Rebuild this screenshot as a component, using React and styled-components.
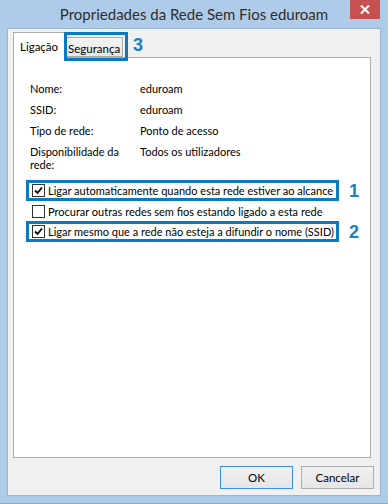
import styled, { createGlobalStyle } from 'styled-components'

const GlobalStyle = createGlobalStyle`
    html, body {
        margin: 0;
        padding: 0;
        background: #aecbe9;
    }
    body {
        font-family: Lato, "Liberation Sans", sans-serif;
        font-size: 11px;
        color: #000;
    }
`

// The blue window frame.
const Frame = styled.div`
    width: 388px;
    height: 504px;
    box-sizing: border-box;
    background: #aecbe9;
    border-bottom: 1px solid #8fa9c6;
    display: flex;
    flex-direction: column;
`
const TitleBar = styled.div`
    height: 28px;
    display: grid;
    grid-template-columns: 1fr auto 1fr;
    align-items: start;
`
const Title = styled.div`
    grid-column: 2;
    padding-top: 4px;
    font-size: 15px;
    line-height: 20px;
    color: #2e2e2e;
`
const CloseButton = styled.div`
    grid-column: 3;
    justify-self: end;
    margin-right: 8px;
    width: 30px;
    height: 19px;
    background: #c75050;
    display: flex;
    align-items: center;
    justify-content: center;
`
const Client = styled.div`
    margin: 0 7px;
    height: 468px;
    box-sizing: border-box;
    background: #f0f0f0;
    border: 1px solid #9db4cd;
    padding: 3px 7px 0 5px;
    display: flex;
    flex-direction: column;
`
const TabStrip = styled.div`
    display: flex;
    align-items: flex-end;
    height: 25px;
    position: relative;
    z-index: 1;
`
const Tab = styled.div`
    position: relative;
    box-sizing: border-box;
    border: 1px solid #acacac;
    border-bottom: ${p => (p.$active ? 'none' : '1px solid #acacac')};
    border-left: ${p => (p.$active ? '1px solid #acacac' : 'none')};
    background: ${p => (p.$active ? '#fff' : 'linear-gradient(#f3f3f3, #e8e8e8)')};
    height: ${p => (p.$active ? '26px' : '20px')};
    margin-bottom: ${p => (p.$active ? '-1px' : '0')};
    width: ${p => p.$width}px;
    padding: ${p => (p.$active ? '6px 0 0 6px' : '3px 0 0 3px')};
    font-size: 11.5px;
    line-height: 15px;
    white-space: nowrap;
`
// Blue annotation box drawn over a control.
const Marker = styled.span`
    position: absolute;
    left: -1px;
    top: -6px;
    right: -6px;
    bottom: -5px;
    border: 3px solid #0a7bc1;
    pointer-events: none;
`
const Number = styled.span`
    font-family: "Liberation Sans", Arial, sans-serif;
    font-weight: bold;
    font-size: 18px;
    line-height: 18px;
    color: #1a7fc3;
    margin-left: ${p => p.$gap}px;
    margin-bottom: ${p => p.$lift || 0}px;
`
const Panel = styled.div`
    width: 358px;
    height: 401px;
    box-sizing: border-box;
    background: #fff;
    border: 1px solid #acacac;
    padding: 24px 0 0 16px;
`
const InfoGrid = styled.div`
    display: grid;
    grid-template-columns: 104px 1fr;
    column-gap: 6px;
    row-gap: 8px;
    line-height: 13px;
`
const CheckList = styled.div`
    display: flex;
    flex-direction: column;
    margin: 9px 0 0 -4px;
`
const CheckLine = styled.div`
    display: flex;
    align-items: center;
    margin-top: ${p => (p.$overlap ? '-1px' : '0')};
`
const CheckRow = styled.label`
    display: flex;
    align-items: center;
    box-sizing: border-box;
    height: 21px;
    width: ${p => (p.$marked ? '313px' : 'auto')};
    border: 3px solid ${p => (p.$marked ? '#0a7bc1' : 'transparent')};
    padding: 0 2px 0 3px;
    white-space: nowrap;
`
const Box = styled.span`
    width: 13px;
    height: 13px;
    box-sizing: border-box;
    border: 1px solid #333;
    background: #fff;
    margin-right: 3px;
    flex-shrink: 0;
    display: flex;
    align-items: center;
    justify-content: center;
`
const ButtonRow = styled.div`
    display: flex;
    justify-content: flex-end;
    gap: 8px;
    margin-top: 8px;
    margin-right: -1px;
`
const Button = styled.div`
    width: 73px;
    height: 23px;
    box-sizing: border-box;
    border: 1px solid ${p => (p.$default ? '#3d8ee0' : '#adadad')};
    background: linear-gradient(#f0f0f0, #e5e5e5);
    font-size: 11.5px;
    display: flex;
    align-items: center;
    justify-content: center;
`

const Check = () => (
    <svg width="9" height="9" viewBox="0 0 9 9">
        <path d="M1 4.5 L3.5 7 L8 1.5" fill="none" stroke="#000" strokeWidth="1.8" />
    </svg>
)

const info = [
    ['Nome:', 'eduroam'],
    ['SSID:', 'eduroam'],
    ['Tipo de rede:', 'Ponto de acesso'],
    ['Disponibilidade da rede:', 'Todos os utilizadores'],
]

const options = [
    { text: 'Ligar automaticamente quando esta rede estiver ao alcance', checked: true, mark: '1' },
    { text: 'Procurar outras redes sem fios estando ligado a esta rede', checked: false },
    { text: 'Ligar mesmo que a rede não esteja a difundir o nome (SSID)', checked: true, mark: '2' },
]

const App = () => (
    <>
        <GlobalStyle />
        <Frame>
            <TitleBar>
                <Title>Propriedades da Rede Sem Fios eduroam</Title>
                <CloseButton>
                    <svg width="10" height="9" viewBox="0 0 10 9">
                        <path d="M1 0.5 L9 8.5 M9 0.5 L1 8.5" stroke="#fff" strokeWidth="2" />
                    </svg>
                </CloseButton>
            </TitleBar>
            <Client>
                <TabStrip>
                    <Tab $active $width={52}>Ligação</Tab>
                    <Tab $width={58}>
                        Segurança
                        <Marker />
                    </Tab>
                    <Number $gap={10} $lift={3}>3</Number>
                </TabStrip>
                <Panel>
                    <InfoGrid>
                        {info.map(([label, value]) => [
                            <div key={label}>{label}</div>,
                            <div key={label + 'v'}>{value}</div>,
                        ])}
                    </InfoGrid>
                    <CheckList>
                        {options.map((o, i) => (
                            <CheckLine key={i} $overlap={i === 2}>
                                <CheckRow $marked={!!o.mark}>
                                    <Box>{o.checked && <Check />}</Box>
                                    {o.text}
                                </CheckRow>
                                {o.mark && <Number $gap={10}>{o.mark}</Number>}
                            </CheckLine>
                        ))}
                    </CheckList>
                </Panel>
                <ButtonRow>
                    <Button $default>OK</Button>
                    <Button>Cancelar</Button>
                </ButtonRow>
            </Client>
        </Frame>
    </>
)

export default App
